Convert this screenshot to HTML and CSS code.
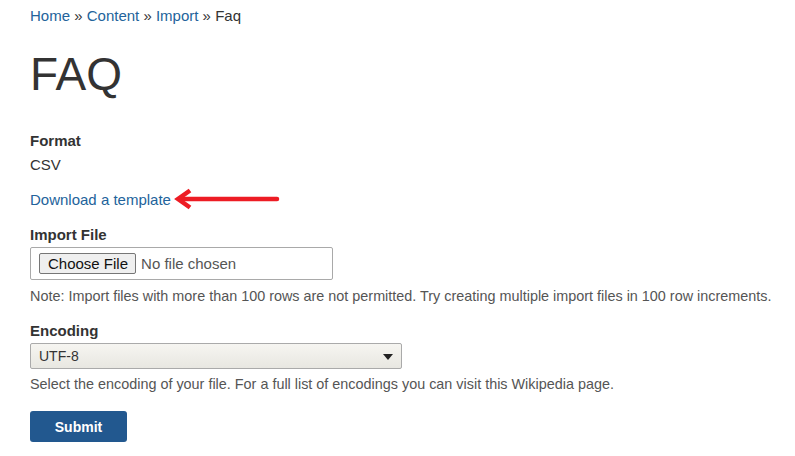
FILE: index.html
```html
<!DOCTYPE html>
<html lang="en">
<head>
    <meta charset="UTF-8">
    <title>Faq | Import</title>
    <link rel="stylesheet" href="styles.css">
</head>
<body>
    <div class="page">
        <nav class="breadcrumb">
            <a href="#">Home</a> » <a href="#">Content</a> » <a href="#">Import</a> » Faq
        </nav>
        <h1>FAQ</h1>

        <form class="import-form">
            <div class="field field-format">
                <label class="field-label">Format</label>
                <div class="field-value">CSV</div>
            </div>

            <div class="template-link">
                <a href="#">Download a template</a>
                <svg class="pointer" width="110" height="22" viewBox="0 0 110 22">
                    <path d="M7 11 H104" stroke="#ed1c24" stroke-width="4.5" stroke-linecap="round"/>
                    <path d="M17 2.5 L5 11 L17 19.5" fill="none" stroke="#ed1c24" stroke-width="4.5"/>
                </svg>
            </div>

            <div class="field">
                <label class="field-label" for="import-file">Import File</label>
                <input type="file" id="import-file" class="file-input">
                <div class="description">Note: Import files with more than 100 rows are not permitted. Try creating multiple import files in 100 row increments.</div>
            </div>

            <div class="field">
                <label class="field-label" for="encoding">Encoding</label>
                <div class="select-wrap">
                    <select id="encoding" class="select">
                        <option>UTF-8</option>
                        <option>ISO-8859-1</option>
                    </select>
                </div>
                <div class="description description-tight">Select the encoding of your file. For a full list of encodings you can visit this Wikipedia page.</div>
            </div>

            <button type="submit" class="button">Submit</button>
        </form>
    </div>
</body>
</html>
```

FILE: styles.css
```css
body {
    margin: 0;
    font-family: 'Liberation Sans', Arial, sans-serif;
    font-size: 15px;
    color: #333;
    background: #fff;
}

a {
    color: #23639b;
    text-decoration: none;
}

.page {
    padding: 6px 10px 0 30px;
}

.breadcrumb {
    line-height: 20px;
    color: #333;
}

h1 {
    font-size: 46px;
    font-weight: normal;
    line-height: 56px;
    margin: 20px 0 29px;
    color: #333;
}

.field {
    margin-bottom: 15px;
}

.field-format {
    margin-bottom: 14px;
}

.field-label {
    display: block;
    font-weight: bold;
    line-height: 20px;
    margin-bottom: 2px;
}

.field-format .field-label {
    margin-bottom: 4px;
}

.field-value {
    line-height: 20px;
}

.template-link {
    display: flex;
    align-items: center;
    height: 20px;
    margin-bottom: 16px;
}

.pointer {
    margin-left: 2px;
}

.file-input {
    display: block;
    box-sizing: border-box;
    width: 303px;
    height: 33px;
    padding: 5px 8px;
    border: 1px solid #a9a9a9;
    border-radius: 2px;
    font-family: inherit;
    font-size: 15px;
    color: #555;
}

.file-input::file-selector-button {
    font-family: inherit;
    font-size: 15px;
    color: #111;
    background: #efefef;
    border: 1px solid #767676;
    border-radius: 2px;
    padding: 1px 7px 1px 8px;
    margin-right: 5px;
}

.description {
    margin-top: 6px;
    font-size: 14.4px;
    line-height: 20px;
    color: #555;
    white-space: nowrap;
}

.description-tight {
    margin-top: 5px;
}

.select-wrap {
    position: relative;
    width: 372px;
}

.select {
    display: block;
    width: 100%;
    height: 26px;
    padding: 0 8px;
    appearance: none;
    -webkit-appearance: none;
    border: 1px solid #aaa;
    border-radius: 2px;
    background: linear-gradient(#f6f5f1, #e8e7e1);
    font-family: inherit;
    font-size: 14px;
    color: #333;
}

.select-wrap::after {
    content: '';
    position: absolute;
    right: 9px;
    top: 11px;
    border-left: 5px solid transparent;
    border-right: 5px solid transparent;
    border-top: 6px solid #222;
    pointer-events: none;
}

.button {
    margin-top: 2px;
    width: 97px;
    height: 31px;
    border: 0;
    border-radius: 3px;
    background: #22588f;
    color: #fff;
    font-family: inherit;
    font-size: 14px;
    font-weight: bold;
}
```
